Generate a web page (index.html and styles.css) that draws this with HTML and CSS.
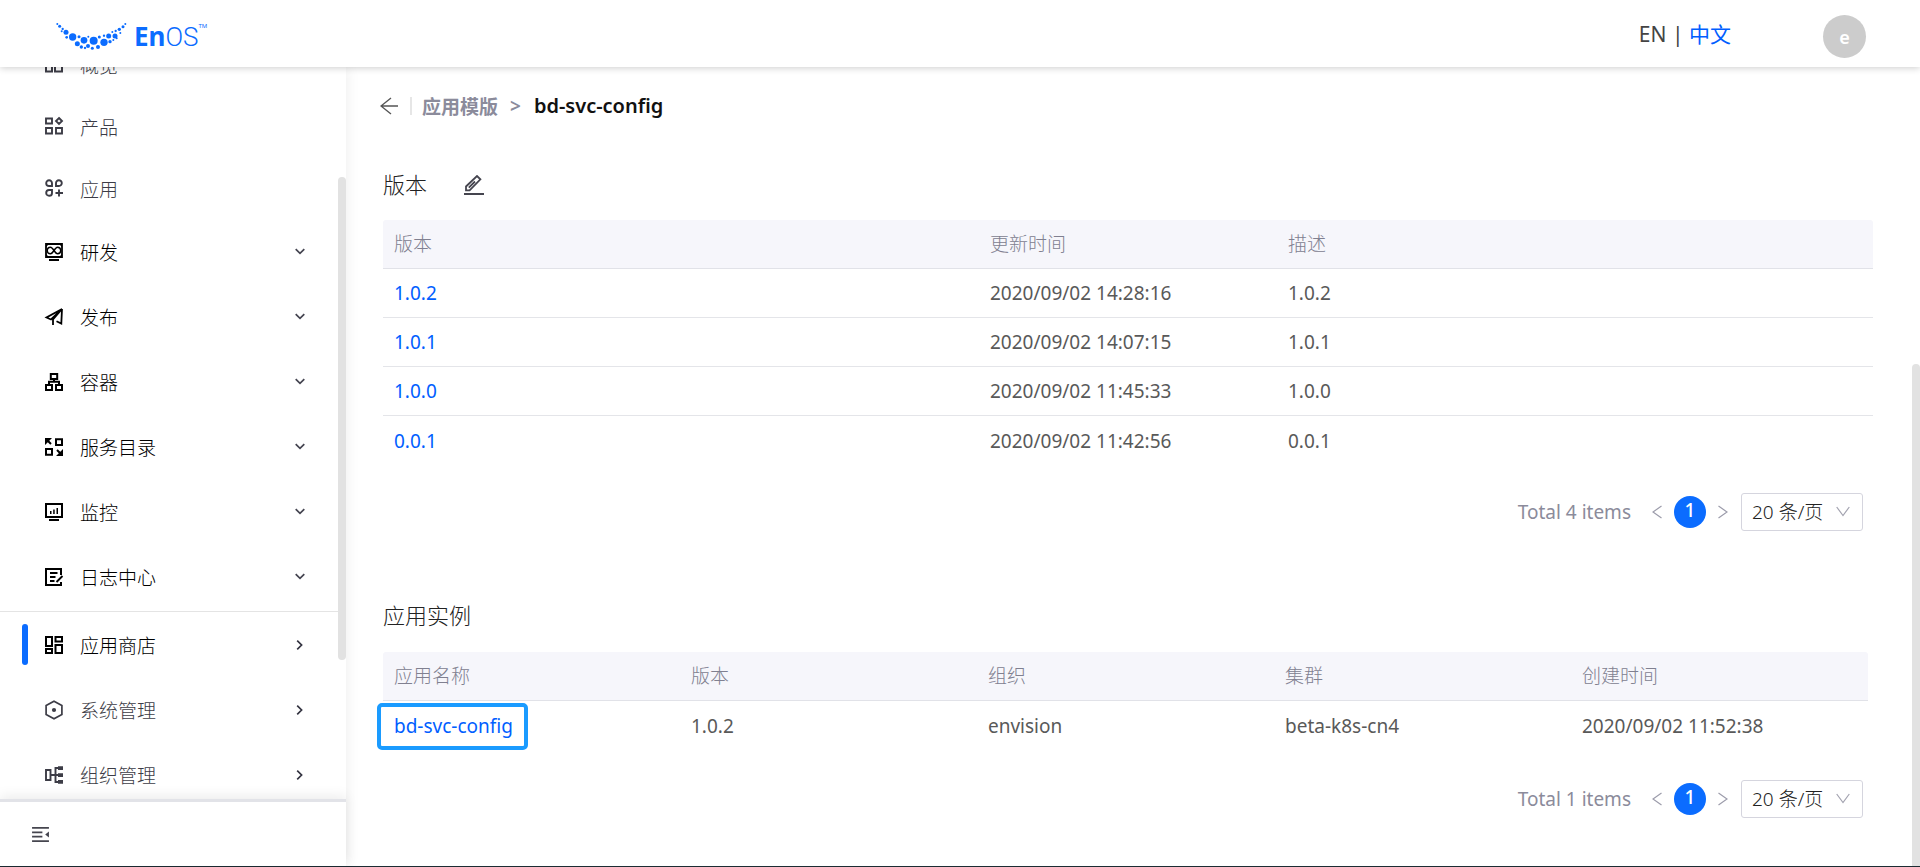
FILE: index.html
```html
<!DOCTYPE html>
<html lang="zh-CN">
<head>
<meta charset="utf-8">
<title>EnOS</title>
<link rel="stylesheet" href="styles.css">
</head>
<body>
<svg class="sprite" aria-hidden="true">
  <symbol id="down" viewBox="0 0 10 7"><path d="M.7 1.2 5 5.4l4.300-4.200" fill="none" stroke="currentColor" stroke-width="1.700"/></symbol>
  <symbol id="right" viewBox="0 0 7 10"><path d="M1.200.7 5.600 5 1.200 9.300" fill="none" stroke="currentColor" stroke-width="1.700"/></symbol>
  <symbol id="prev" viewBox="0 0 10 14"><path d="M9.500 1 1 7l8.500 6" fill="none" stroke="currentColor" stroke-width="1.200"/></symbol>
  <symbol id="next" viewBox="0 0 10 14"><path d="M.5 1 9 7 .5 13" fill="none" stroke="currentColor" stroke-width="1.200"/></symbol>
  <symbol id="open" viewBox="0 0 14 11"><path d="M.7 1 7 9.500 13.300 1" fill="none" stroke="currentColor" stroke-width="1.200"/></symbol>
</svg>
<div class="app">
  <header class="header">
    <a class="logo" href="#" aria-label="EnOS">
      <svg class="logo-mark" viewBox="168 66 213 87">
        <circle cx="172" cy="72" r="3"/><circle cx="179" cy="79" r="4.500"/><circle cx="188" cy="87" r="3.500"/><circle cx="185" cy="94" r="3"/><circle cx="198" cy="97" r="7.500"/><circle cx="200" cy="112" r="4"/><circle cx="218" cy="111" r="11"/><circle cx="237" cy="110" r="4.500"/><circle cx="232" cy="131" r="7.500"/><circle cx="252" cy="121" r="10"/><circle cx="265" cy="110" r="3"/><circle cx="244" cy="141" r="5"/><circle cx="255" cy="144" r="3.500"/><circle cx="264" cy="138" r="6"/><circle cx="281" cy="122" r="12"/><circle cx="298" cy="111" r="4.500"/><circle cx="277" cy="145" r="4.500"/><circle cx="294" cy="141" r="6"/><circle cx="312" cy="127" r="11"/><circle cx="312" cy="107" r="3.500"/><circle cx="326" cy="108" r="7.500"/><circle cx="330" cy="125" r="5"/><circle cx="345" cy="108" r="7.500"/><circle cx="337" cy="96" r="3"/><circle cx="347" cy="93" r="3.500"/><circle cx="340" cy="120" r="3"/><circle cx="350" cy="115" r="3"/><circle cx="358" cy="88" r="5"/><circle cx="361" cy="99" r="3"/><circle cx="369" cy="80" r="4.500"/><circle cx="376" cy="72" r="3"/>
      </svg>
      <span class="logo-text"><b>En</b><span class="logo-thin">OS</span></span><span class="logo-tm">TM</span>
    </a>
    <nav class="lang" aria-label="语言"><a class="lang-link" href="#">EN</a> | <a class="lang-link lang-active" href="#">中文</a></nav>
    <button class="avatar" type="button">e</button>
  </header>

  <div class="body">
    <aside class="sidebar">
      <nav class="nav">
        <ul class="nav-list">
          <li><a class="nav-item" href="#"><svg class="nav-icon" viewBox="0 0 18 18"><path d="M1 1h6v15.500H1zM10 1h7v4h-7zM10 8.500h7v8h-7z" fill="none" stroke="currentColor" stroke-width="2"/></svg>概览</a></li>
          <li><a class="nav-item" href="#"><svg class="nav-icon" viewBox="0 0 18 18"><path d="M1 1.500h6v5H1zM1 11h6v5.500H1zM11 11h6v5.500h-6zM14 1l3 3-3 3-3-3z" fill="none" stroke="currentColor" stroke-width="1.900"/></svg>产品</a></li>
          <li><a class="nav-item" href="#"><svg class="nav-icon" viewBox="0 0 18 18"><path d="M1.200 4.200a2.900 2.900 0 1 1 5.800 0V7H4.100a2.900 2.900 0 0 1-2.900-2.800zM11 7V4.200A2.900 2.900 0 1 1 13.900 7zM7 11v2.900A2.900 2.900 0 1 1 4.100 11zM14 10.500v7M10.500 14H18" fill="none" stroke="currentColor" stroke-width="1.900"/></svg>应用</a></li>
          <li><a class="nav-item nav-group" href="#"><svg class="nav-icon" viewBox="0 0 18 18"><path d="M1 1h16v13H1z" fill="none" stroke="currentColor" stroke-width="1.800"/><path d="M9 7.500C7.500 5.200 6.800 4.300 5.500 4.300a3.200 3.200 0 0 0 0 6.400c1.300 0 2-.9 3.500-3.200s2.200-3.200 3.500-3.200a3.200 3.200 0 0 1 0 6.400c-1.300 0-2-.9-3.500-3.200z" fill="none" stroke="currentColor" stroke-width="1.400"/><path d="M1 1h3L1 4zM17 1h-3l3 3zM1 14v-3l3 3zM17 14v-3l-3 3zM4 16h10v2H4z" fill="currentColor"/></svg>研发<svg class="nav-down"><use href="#down"/></svg></a></li>
          <li><a class="nav-item nav-group" href="#"><svg class="nav-icon" viewBox="0 0 18 18"><path d="M17 1 1.500 9.500 6 11.500zM17 1 8 11.500V17M17 1l-.7 14.500-4.800-2.300" fill="none" stroke="currentColor" stroke-width="1.800"/></svg>发布<svg class="nav-down"><use href="#down"/></svg></a></li>
          <li><a class="nav-item nav-group" href="#"><svg class="nav-icon" viewBox="0 0 18 18"><path d="M5.800 1h6.400v5H5.800zM1 12h6v5H1zM11 12h6v5h-6zM9 6v3M4 12V8.800h10V12" fill="none" stroke="currentColor" stroke-width="2"/></svg>容器<svg class="nav-down"><use href="#down"/></svg></a></li>
          <li><a class="nav-item nav-group" href="#"><svg class="nav-icon" viewBox="0 0 18 18"><path d="M11 1.200h6V7h-6zM1 11h6v5.800H1zM1.500 1.500 6 6M12 12l4.500 4.500" fill="none" stroke="currentColor" stroke-width="2"/><path d="M0 0h7L0 7zM18 18h-7l7-7z" fill="currentColor"/></svg>服务目录<svg class="nav-down"><use href="#down"/></svg></a></li>
          <li><a class="nav-item nav-group" href="#"><svg class="nav-icon" viewBox="0 0 18 18"><path d="M1 1h16v13H1z" fill="none" stroke="currentColor" stroke-width="2"/><path d="M5 8h1.500v3H5zM8.200 6.500h1.500V11H8.200zM11.500 5H13v6h-1.500zM4 16h10v2H4z" fill="currentColor"/></svg>监控<svg class="nav-down"><use href="#down"/></svg></a></li>
          <li><a class="nav-item nav-group" href="#"><svg class="nav-icon" viewBox="0 0 18 18"><path d="M16 7V1H1v16h15v-3" fill="none" stroke="currentColor" stroke-width="2"/><path d="M5 5h7.500M5 9h5.500M5 13h4.500M17.500 8 11.500 14" fill="none" stroke="currentColor" stroke-width="1.900"/></svg>日志中心<svg class="nav-down"><use href="#down"/></svg></a></li>
        </ul>
        <ul class="nav-list nav-second">
          <li><a class="nav-item nav-group nav-current" href="#"><svg class="nav-icon" viewBox="0 0 18 18"><path d="M1 1h6v9H1zM10.500 1H17v4.500h-6.500zM10.500 9H17v8h-6.500zM1 13h6v4H1z" fill="none" stroke="currentColor" stroke-width="2"/></svg>应用商店<svg class="nav-right"><use href="#right"/></svg></a></li>
          <li><a class="nav-item nav-group nav-soft" href="#"><svg class="nav-icon" viewBox="0 0 18 18"><path d="m9 .2 7.900 4.400v8.800L9 17.800l-7.900-4.400V4.600z" fill="none" stroke="currentColor" stroke-width="1.700"/><circle cx="9" cy="9" r="2.100" fill="currentColor"/></svg>系统管理<svg class="nav-right"><use href="#right"/></svg></a></li>
          <li><a class="nav-item nav-group nav-soft" href="#"><svg class="nav-icon" viewBox="0 0 18 18"><path d="M1 4h4.500v10H1zM6 9h8M15 2h-4.500v14H15" fill="none" stroke="currentColor" stroke-width="1.900"/><path d="M13 .3h5v3.700h-5zM13 7.200h5v3.700h-5zM13 14.100h5v3.700h-5z" fill="currentColor"/></svg>组织管理<svg class="nav-right"><use href="#right"/></svg></a></li>
        </ul>
        <div class="nav-thumb"></div>
      </nav>
      <div class="sidebar-foot">
        <button class="icon-button" type="button" aria-label="收起"><svg class="fold-icon" viewBox="0 0 18 16"><path d="M0 1h18M0 5.700h11M0 10.300h11M0 15h18" stroke="currentColor" stroke-width="1.800"/><path d="M18 4.800v6.400L14 8z" fill="currentColor"/></svg></button>
      </div>
    </aside>

    <main class="main">
      <nav class="crumbs" aria-label="路径">
        <button class="icon-button back" type="button" aria-label="返回"><svg class="back-icon" viewBox="0 0 18 18"><path d="M18 9H1M11 1 1 9l10 8" fill="none" stroke="currentColor" stroke-width="1.400"/></svg></button>
        <a class="crumb-link" href="#">应用模版</a>
        <span class="crumb-sep">&gt;</span>
        <span class="crumb-now">bd-svc-config</span>
      </nav>

      <section class="panel">
        <div class="panel-head">
          <h2 class="panel-title">版本</h2>
          <button class="icon-button" type="button" aria-label="编辑"><svg class="edit-icon" viewBox="0 0 20 20"><path d="M2 15.300v-3.800L13 1l3.400 3.300L5.600 15.300zM4.800 12.600 11 6.500" fill="none" stroke="currentColor" stroke-width="1.800"/><path d="M0 19h20" stroke="currentColor" stroke-width="2"/></svg></button>
        </div>
        <table class="table versions">
          <thead><tr><th class="wide">版本</th><th>更新时间</th><th class="wide">描述</th></tr></thead>
          <tbody>
            <tr><td><a class="link" href="#">1.0.2</a></td><td>2020/09/02 14:28:16</td><td>1.0.2</td></tr>
            <tr><td><a class="link" href="#">1.0.1</a></td><td>2020/09/02 14:07:15</td><td>1.0.1</td></tr>
            <tr><td><a class="link" href="#">1.0.0</a></td><td>2020/09/02 11:45:33</td><td>1.0.0</td></tr>
            <tr><td><a class="link" href="#">0.0.1</a></td><td>2020/09/02 11:42:56</td><td>0.0.1</td></tr>
          </tbody>
        </table>
        <div class="pager">
          <span class="total">Total 4 items</span>
          <button class="step" type="button" aria-label="上一页"><svg class="step-icon"><use href="#prev"/></svg></button>
          <button class="page" type="button">1</button>
          <button class="step" type="button" aria-label="下一页"><svg class="step-icon"><use href="#next"/></svg></button>
          <label class="size"><select class="size-select" aria-label="每页条数"><option>20 条/页</option></select><svg class="size-icon"><use href="#open"/></svg></label>
        </div>
      </section>

      <section class="panel instances">
        <div class="panel-head"><h2 class="panel-title">应用实例</h2></div>
        <table class="table">
          <thead><tr><th>应用名称</th><th>版本</th><th>组织</th><th>集群</th><th>创建时间</th></tr></thead>
          <tbody>
            <tr><td><a class="link marked" href="#">bd-svc-config</a></td><td>1.0.2</td><td>envision</td><td>beta-k8s-cn4</td><td>2020/09/02 11:52:38</td></tr>
          </tbody>
        </table>
        <div class="pager">
          <span class="total">Total 1 items</span>
          <button class="step" type="button" aria-label="上一页"><svg class="step-icon"><use href="#prev"/></svg></button>
          <button class="page" type="button">1</button>
          <button class="step" type="button" aria-label="下一页"><svg class="step-icon"><use href="#next"/></svg></button>
          <label class="size"><select class="size-select" aria-label="每页条数"><option>20 条/页</option></select><svg class="size-icon"><use href="#open"/></svg></label>
        </div>
      </section>
      <div class="main-thumb"></div>
    </main>
  </div>
</div>
</body>
</html>
```
FILE: styles.css
```css
* { box-sizing: border-box; }
body { margin: 0; font-family: "Noto Sans", "Noto Sans CJK SC", sans-serif; font-size: 19px; color: #595959; background: #fff; }
a { color: inherit; text-decoration: none; }
button { font: inherit; border: 0; padding: 0; background: none; cursor: pointer; }
ul { list-style: none; margin: 0; padding: 0; }
.sprite { position: absolute; width: 0; height: 0; }

.app { height: 100vh; display: grid; grid-template-rows: 67px minmax(0, 1fr); border-bottom: 1px solid #1c2c33; }
.header { position: relative; z-index: 2; display: flex; align-items: center; padding: 0 54px 0 56px; background: #fff; box-shadow: 0 1px 7px rgba(0, 0, 0, .2); }
.logo { display: flex; align-items: center; margin-right: auto; padding-top: 5px; color: #0b6cff; }
.logo-mark { width: 71px; height: 29px; fill: currentColor; margin-right: 7px; }
.logo-text { font-family: "Noto Sans", sans-serif; font-size: 26px; line-height: 30px; }
.logo-thin { font-family: Roboto, sans-serif; font-weight: 300; }
.logo-tm { align-self: flex-start; font-size: 6px; line-height: 10px; }
.lang { font-size: 21px; line-height: 32px; color: #444; margin-right: 92px; }
.lang-active { color: #005eff; }
.avatar { width: 43px; height: 43px; border-radius: 50%; background: #ccc; color: #fff; font-size: 18px; font-weight: 600; margin-top: 6px; }

.body { display: grid; grid-template-columns: 346px minmax(0, 1fr); min-height: 0; }
.sidebar { position: relative; z-index: 1; display: flex; flex-direction: column; min-height: 0; background: #fff; box-shadow: 0 0 14px rgba(0, 0, 0, .08); }
.nav { position: relative; flex: 1; min-height: 0; overflow: hidden; }
.nav-list { margin-right: 8px; font-family: "Noto Sans CJK SC", sans-serif; font-size: 19px; font-weight: 300; }
.nav-list:first-child { margin-top: -34px; }
.nav-second { border-top: 1px solid #e4e4e4; margin-top: 2px; }
.nav-item { position: relative; display: flex; align-items: center; height: 62px; padding: 0 33px 0 45px; color: #3c3c46; }
.nav-group { height: 65px; color: #000; }
.nav-soft { color: #3c3c46; }
.nav-icon { width: 18px; height: 18px; margin-right: 17px; overflow: visible; }
.nav-down { width: 10px; height: 7px; margin-left: auto; color: #444450; }
.nav-right { width: 7px; height: 10px; margin: 0 2px 0 auto; color: #333340; }
.nav-current::before { content: ""; position: absolute; left: 22px; top: 12px; width: 6px; height: 41px; border-radius: 3px; background: #0b6cff; }
.nav-thumb { position: absolute; right: 0; top: 110px; width: 8px; height: 483px; border-radius: 4px; background: #e2e2e2; }
.sidebar-foot { position: relative; height: 67px; padding: 0 32px; display: flex; align-items: center; border-top: 3px solid #e2e3e8; box-shadow: 0 -3px 12px rgba(0, 0, 0, .08); }
.icon-button { display: flex; color: #45454f; }
.fold-icon { width: 17px; height: 15px; }

.main { position: relative; min-width: 0; overflow: hidden; padding: 22px 47px 0 37px; }
.crumbs { display: flex; align-items: center; height: 33px; font-weight: 600; color: #8b8b9b; }
.back { color: #555; margin-left: -3px; padding-right: 12px; border-right: 2px solid #e6e6e6; }
.back-icon { width: 18px; height: 18px; }
.crumb-link { font-family: "Noto Sans CJK SC", sans-serif; font-size: 19px; font-weight: 700; margin: 0 12px 0 10px; }
.crumb-sep { margin-right: 13px; }
.crumb-now { font-size: 20px; color: #111; }
.panel-head { display: flex; align-items: center; gap: 37px; height: 32px; margin: 47px 0 19px; }
.panel-title { margin: 0; padding-bottom: 4px; font-family: "Noto Sans CJK SC", sans-serif; font-size: 22px; line-height: 28px; font-weight: 300; color: #222; }
.edit-icon { width: 20px; height: 20px; }
.table { width: 100%; table-layout: fixed; border-collapse: separate; border-spacing: 0; }
.table th { height: 49px; padding: 0 11px 2px; text-align: left; font-family: "Noto Sans CJK SC", sans-serif; font-size: 19px; font-weight: 300; line-height: 28px; color: #808090; background: #f6f6fb; border-bottom: 1px solid #e1e2e8; }
.table th:first-child { border-top-left-radius: 3px; }
.table th:last-child { border-top-right-radius: 3px; }
.table td { height: 49px; padding: 0 11px; line-height: 26px; border-bottom: 1px solid #e4e5e9; }
.table tr:last-child td { border-bottom: 0; }
.versions .wide { width: 40%; }
.link { color: #005eff; }
.marked { position: relative; }
.marked::after { content: ""; position: absolute; inset: -10px -15px -11px -17px; border: 4px solid #1a9bff; border-radius: 5px; }

.pager { display: flex; align-items: center; justify-content: flex-end; margin: 28px 10px 0 0; }
.total { color: #8b8b9b; margin-right: 21px; }
.step { display: flex; color: #9c9cab; }
.step-icon { width: 10px; height: 14px; }
.page { width: 32px; height: 32px; margin: 0 12px; border-radius: 50%; color: #fff; line-height: 28px; font-weight: 500; background: #0b6cff; display: flex; justify-content: center; }
.size { position: relative; margin-left: 13px; }
.size-select { display: block; appearance: none; width: 122px; height: 38px; padding: 0 11px 0 10px; border: 1px solid #d5d5de; border-radius: 3px; background: #fff; color: #222; font-family: "Noto Sans", "Noto Sans CJK SC", sans-serif; font-size: 19px; font-weight: 300; }
.size-icon { position: absolute; right: 13px; top: 13px; width: 14px; height: 11px; color: #a3a3b0; pointer-events: none; }
.instances { margin-right: 5px; }
.instances .panel-head { margin: 69px 0 20px; }
.instances .pager { margin: 30px 5px 0 0; }
.main-thumb { position: absolute; right: 0; top: 297px; bottom: 0; width: 8px; border-radius: 4px 4px 0 0; background: #e2e2e2; }
```
